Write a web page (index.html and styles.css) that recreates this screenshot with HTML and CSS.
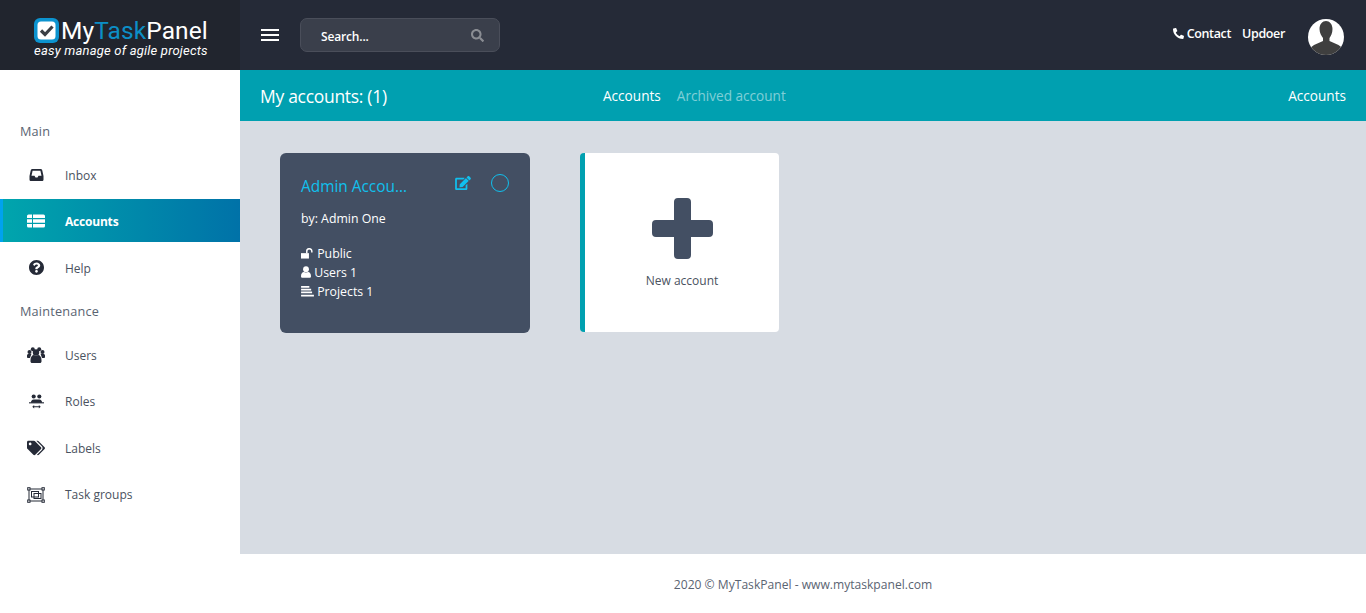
FILE: index.html
```html
<!DOCTYPE html>
<html lang="en">
<head>
<meta charset="UTF-8" />
<title>MyTaskPanel</title>
<link rel="stylesheet" href="styles.css">
</head>
<body>
<header class="topbar">
  <div class="brand">
    <div class="brand-row">
      <svg class="brand-mark" viewBox="0 0 25 25"><rect width="25" height="25" rx="6" fill="#0c93cf"/><rect x="3.5" y="3.5" width="18" height="18" rx="3.5" fill="#fff"/><path d="M7 12.5l4 4 7.5-8" fill="none" stroke="#3b3f45" stroke-width="3.2"/></svg>
      <span class="brand-name">My<span class="brand-blue">Task</span>Panel</span>
    </div>
    <div class="brand-tag">easy manage of agile projects</div>
  </div>
  <div class="topnav">
    <div class="burger"><span></span><span></span><span></span></div>
    <div class="search">
      <span class="search-text">Search...</span>
      <svg class="search-icon" viewBox="0 0 512 512"><path fill="#8a8d93" d="M505 442.700L405.300 343c-4.500-4.500-10.600-7-17-7H372c27.600-35.300 44-79.700 44-128C416 93.100 322.900 0 208 0S0 93.100 0 208s93.100 208 208 208c48.300 0 92.700-16.400 128-44v16.300c0 6.400 2.500 12.500 7 17l99.700 99.700c9.400 9.400 24.600 9.400 33.900 0l28.300-28.300c9.400-9.400 9.400-24.600.1-34zM208 336c-70.700 0-128-57.200-128-128 0-70.700 57.200-128 128-128 70.700 0 128 57.200 128 128 0 70.700-57.200 128-128 128z"/></svg>
    </div>
    <div class="topnav-right">
      <div class="toplinks">
        <svg class="phone" viewBox="0 0 512 512"><path fill="#fff" d="M493.400 24.600l-104-24c-11.300-2.600-22.900 3.300-27.500 13.900l-48 112c-4.200 9.800-1.400 21.300 6.900 28l60.600 49.600c-36 76.700-98.900 140.500-177.200 177.200l-49.600-60.600c-6.800-8.300-18.200-11.100-28-6.900l-112 48C3.900 366.500-2 378.100.6 389.400l24 104C27.100 504.200 36.700 512 48 512c256.100 0 464-207.500 464-464 0-11.200-7.700-20.900-18.600-23.400z" transform="matrix(-1 0 0 1 512 0)"/></svg>
        <span class="toplink contact">Contact</span>
        <span class="toplink">Updoer</span>
      </div>
      <svg class="avatar" viewBox="0 0 36 36"><defs><clipPath id="avatarClip"><circle cx="18" cy="18" r="18"/></clipPath></defs><g clip-path="url(#avatarClip)"><rect width="36" height="36" fill="#fff"/><path d="M11.500 10c0-5 3-8 6.500-8s6.500 3 6.500 8c0 4-1.500 7-3 9v3l9 4 4 3v7H2v-7l4-3 9-4v-3c-1.500-2-3.500-5-3.500-9z" fill="#3f3f3f"/></g></svg>
    </div>
  </div>
</header>

<div class="shell">
  <aside class="sidebar">
    <div class="side-label">Main</div>
    <a class="side-item">
      <svg class="side-icon narrow inbox" viewBox="0 0 14 12"><path fill-rule="evenodd" d="M3 0h8c1 0 1.500.5 1.800 1.500L14 7v3.500c0 1-.7 1.500-1.500 1.500h-11C.7 12 0 11.500 0 10.500V7l1.200-5.500C1.500.5 2 0 3 0zM3.100 1.800L2 6.800h3l1 1.700h2l1-1.700h3l-1.100-5z"/></svg>
      <span>Inbox</span>
    </a>
    <a class="side-item active">
      <svg class="side-icon" viewBox="0 0 18 13"><path fill="#fff" d="M0 1.500A1.500 1.500 0 0 1 1.500 0H5v3.500H0zM6 0h10.500A1.500 1.500 0 0 1 18 1.500v2H6zM0 4.700h5v3.600H0zM6 4.700h12v3.600H6zM0 9.500h5V13H1.500A1.500 1.500 0 0 1 0 11.500zM6 9.500h12v2a1.500 1.500 0 0 1-1.500 1.500H6z"/></svg>
      <span>Accounts</span>
    </a>
    <a class="side-item">
      <svg class="side-icon narrow" viewBox="8 8 496 496"><path d="M504 256c0 137-111 248-248 248S8 393 8 256 119 8 256 8s248 111 248 248zM262.700 90c-54.500 0-89.300 23-116.500 63.800-3.500 5.300-2.400 12.400 2.700 16.300l34.700 26.300c5.200 3.900 12.600 3 16.700-2.100 17.900-22.700 30.100-35.800 57.300-35.800 20.400 0 45.700 13.100 45.700 33 0 15-12.400 22.700-32.600 34C247.100 238.500 216 254.900 216 296v4c0 6.600 5.400 12 12 12h56c6.600 0 12-5.400 12-12v-1.300c0-28.500 83.200-29.700 83.200-106.700 0-58-60.200-102-116.500-102zM256 338c-25.400 0-46 20.600-46 46 0 25.400 20.600 46 46 46s46-20.600 46-46c0-25.400-20.600-46-46-46z"/></svg>
      <span>Help</span>
    </a>
    <div class="side-label">Maintenance</div>
    <a class="side-item low">
      <svg class="side-icon" viewBox="0 0 18 16"><circle cx="2.500" cy="5" r="2"/><circle cx="15.500" cy="5" r="2"/><circle cx="5.800" cy="2.300" r="2"/><circle cx="12.200" cy="2.300" r="2"/><circle cx="9" cy="5.500" r="3.200"/><path d="M0 8.500c0-1 1-1.700 2-1.700h2.500L3 11H.8C.3 11 0 10.600 0 10zM18 8.500c0-1-1-1.700-2-1.700h-2.500L15 11h2.200c.5 0 .8-.4.800-1z"/><path d="M3.500 13c0-3 1.500-5 3.500-5 1 .9 3 .9 4 0 2 0 3.500 2 3.500 5v1.500c0 .9-.7 1.500-1.500 1.500H5c-.8 0-1.500-.6-1.500-1.500z"/></svg>
      <span>Users</span>
    </a>
    <a class="side-item low">
      <svg class="side-icon narrow" viewBox="0 0 16 15"><circle cx="5" cy="2.200" r="2.200"/><circle cx="11" cy="2.200" r="2.200"/><path d="M2 8.800c0-2 1.300-3.400 3-3.400h6c1.700 0 3 1.400 3 3.400z"/><path d="M0 8.300h16v1.200H0z"/><path d="M5.500 12.600h5v.9h-5zM5.500 11.100L3.500 13l2 1.900zM10.500 11.100L12.500 13l-2 1.900z"/></svg>
      <span>Roles</span>
    </a>
    <a class="side-item low">
      <svg class="side-icon" viewBox="0 0 640 512"><path d="M497.900 225.900L286.100 14.100A48 48 0 0 0 252.100 0H48C21.500 0 0 21.500 0 48v204.100a48 48 0 0 0 14.100 33.900l211.900 211.900c18.700 18.700 49.100 18.700 67.900 0l204.100-204.100c18.700-18.700 18.700-49.100 0-67.900zM112 160c-26.500 0-48-21.500-48-48s21.500-48 48-48 48 21.500 48 48-21.500 48-48 48zm513.900 133.800L421.800 497.900c-18.700 18.700-49.100 18.700-67.900 0l-.4-.4L527.600 323.500c17-17 26.400-39.600 26.400-63.600s-9.400-46.600-26.400-63.600L331.400 0h48.700a48 48 0 0 1 33.900 14.100l211.900 211.900c18.700 18.700 18.700 49.100 0 67.800z"/></svg>
      <span>Labels</span>
    </a>
    <a class="side-item low">
      <svg class="side-icon" viewBox="0 0 18 16"><g fill="none" stroke="#252a37" stroke-width="1"><rect x="2" y="2" width="14" height="12"/><rect x="4.500" y="4.500" width="7" height="5.500"/><rect x="7" y="6.500" width="7" height="5"/></g><g fill="#fff" stroke="#252a37" stroke-width="1"><rect x=".7" y=".7" width="2.300" height="2.300"/><rect x="15" y=".7" width="2.300" height="2.300"/><rect x=".7" y="13" width="2.300" height="2.300"/><rect x="15" y="13" width="2.300" height="2.300"/></g></svg>
      <span>Task groups</span>
    </a>
  </aside>

  <div class="content">
    <div class="subhead">
      <h1 class="subhead-title">My accounts: (1)</h1>
      <nav class="tabs">
        <a class="tab current">Accounts</a>
        <a class="tab">Archived account</a>
      </nav>
      <div class="crumb">Accounts</div>
    </div>

    <main class="cards">
      <div class="account-card">
        <div class="account-top">
          <span class="account-name">Admin Accou...</span>
          <svg class="edit-icon" viewBox="0 0 576 512"><path fill="#10c0ee" d="M402.600 83.200l90.200 90.200c3.800 3.800 3.800 10 0 13.800L274.400 405.600l-92.800 10.300c-12.400 1.400-22.900-9.100-21.500-21.500l10.300-92.800L388.800 83.200c3.800-3.800 10-3.800 13.800 0zm162-22.900l-48.800-48.800c-15.200-15.200-39.900-15.200-55.200 0l-35.400 35.400c-3.800 3.800-3.800 10 0 13.800l90.200 90.200c3.800 3.800 10 3.800 13.800 0l35.400-35.400c15.200-15.300 15.200-40 0-55.200zM384 346.200V448H64V128h229.800c3.200 0 6.200-1.300 8.500-3.500l40-40c7.600-7.600 2.200-20.500-8.500-20.500H48C21.500 64 0 85.500 0 112v352c0 26.500 21.500 48 48 48h352c26.500 0 48-21.500 48-48V306.200c0-10.700-12.900-16-20.500-8.500l-40 40c-2.200 2.300-3.500 5.300-3.500 8.500z"/></svg>
          <span class="account-radio"></span>
        </div>
        <div class="account-by">by: Admin One</div>
        <ul class="account-meta">
          <li>
            <svg class="meta-icon lock" viewBox="0 0 18 14"><path fill="#fff" d="M0 6.500h11V14H0z"/><path fill="none" stroke="#fff" stroke-width="2" d="M8 6.500V4a3.500 3.500 0 0 1 7-.3v2"/></svg>
            Public
          </li>
          <li>
            <svg class="meta-icon user" viewBox="0 0 12 14"><circle cx="6" cy="3.600" r="3.500" fill="#fff"/><path fill="#fff" d="M0 12c0-3 1.500-5 3.500-5 1 .8 4 .8 5 0 2 0 3.500 2 3.500 5 0 1.200-.8 2-2 2H2c-1.200 0-2-.8-2-2z"/></svg>
            Users 1
          </li>
          <li>
            <svg class="meta-icon stack" viewBox="0 0 14 12"><path fill="#fff" d="M0 0h9v2H0zM0 3h11v2H0zM0 6h12v2H0zM0 9.500h14v2H0z"/></svg>
            Projects 1
          </li>
        </ul>
      </div>

      <div class="new-card">
        <svg class="plus" viewBox="0 0 61 61"><path fill="#434f63" d="M22 4a4 4 0 0 1 4-4h9a4 4 0 0 1 4 4v18h18a4 4 0 0 1 4 4v9a4 4 0 0 1-4 4H39v18a4 4 0 0 1-4 4h-9a4 4 0 0 1-4-4V39H4a4 4 0 0 1-4-4v-9a4 4 0 0 1 4-4h18z"/></svg>
        <span class="new-label">New account</span>
      </div>
    </main>

    <footer class="footer">2020 © MyTaskPanel - www.mytaskpanel.com</footer>
  </div>
</div>
</body>
</html>
```

FILE: styles.css
```css
* { box-sizing: border-box; }
html, body {
  height: 100%;
}
body {
  margin: 0;
  display: flex;
  flex-direction: column;
  height: 613px;
  overflow: hidden;
  background: #fff;
  color: #3c4454;
  font-family: "Open Sans", "Noto Sans", sans-serif;
  font-size: 13px;
}

/* top bar */
.topbar {
  display: flex;
  height: 70px;
  flex: none;
}
.brand {
  width: 240px;
  background: #21252e;
  color: #fff;
  padding: 17px 0 0 34px;
}
.brand-row {
  display: flex;
  align-items: center;
  height: 26px;
}
.brand-mark {
  width: 25px;
  height: 25px;
  margin-right: 2px;
}
.brand-name {
  font-family: "Roboto", sans-serif;
  font-size: 24.5px;
  letter-spacing: 0.1px;
  font-weight: 400;
  white-space: nowrap;
}
.brand-blue { color: #0c8fc7; }
.brand-tag {
  font-family: "Roboto", sans-serif;
  font-style: italic;
  font-size: 13px;
  letter-spacing: 0.2px;
  line-height: 16px;
  white-space: nowrap;
}
.topnav {
  flex: 1;
  display: flex;
  align-items: center;
  background: #252a37;
  color: #fff;
  padding: 0 22px 0 21px;
}
.burger {
  width: 18px;
  margin-right: 21px;
}
.burger span {
  display: block;
  height: 2px;
  background: #fff;
  margin: 3px 0;
}
.search {
  display: flex;
  align-items: center;
  justify-content: space-between;
  width: 200px;
  height: 34px;
  padding: 0 15px 0 20px;
  background: #3a3f4b;
  border: 1px solid #4a4e5a;
  border-radius: 7px;
  font-size: 12px;
  font-weight: 600;
}
.search-text { margin-top: 2px; letter-spacing: -0.15px; }
.search-icon {
  width: 13px;
  height: 13px;
}
.topnav-right {
  margin-left: auto;
  display: flex;
  align-items: center;
}
.toplinks {
  display: flex;
  align-items: center;
  margin-top: -4px;
}
.phone {
  width: 11px;
  height: 11px;
  margin-right: 3px;
}
.toplink {
  font-weight: 600;
  font-size: 12.5px;
  letter-spacing: -0.35px;
}
.contact { margin-right: 11px; }
.avatar {
  width: 36px;
  height: 36px;
  margin: 4px 0 0 23px;
}

/* sidebar */
.shell {
  flex: 1;
  display: flex;
  min-height: 0;
}
.sidebar {
  display: flex;
  flex-direction: column;
  width: 240px;
  flex: none;
  padding-top: 40.5px;
  background: #fff;
}
.side-label {
  height: 41px;
  line-height: 41px;
  padding-left: 20px;
  font-size: 12.7px;
  letter-spacing: 0.2px;
  color: #5a6472;
}
.side-item {
  display: flex;
  align-items: center;
  height: 43px;
  margin: 1.75px 0;
  padding-left: 27px;
  color: #4a5260;
  font-size: 12px;
}
.side-item span { margin-top: 2px; }
.side-item.low span { margin-top: 0; }
.side-icon {
  width: 18px;
  height: 16px;
  margin-right: 20px;
  fill: #252a37;
}
.side-icon.narrow {
  width: 15px;
  height: 15px;
  margin: 0 21px 0 2px;
}
.side-icon.inbox {
  height: 12px;
}
.side-item.active {
  margin: 1.25px 0 2.25px;
  padding-left: 24px;
  border-left: 3px solid #00a2ef;
  background: linear-gradient(to right, #00a5ad, #0072a8);
  color: #fff;
  font-weight: 700;
  letter-spacing: -0.2px;
}

/* page */
.content {
  flex: 1;
  display: flex;
  flex-direction: column;
  min-width: 0;
}
.subhead {
  display: flex;
  align-items: center;
  height: 51px;
  flex: none;
  padding: 0 20px 0 20px;
  background: #00a0b0;
  color: #fff;
}
.subhead-title {
  width: 343px;
  margin: 0;
  font-size: 17.5px;
  font-weight: 400;
  letter-spacing: -0.3px;
}
.tabs {
  display: flex;
  gap: 16px;
}
.tab {
  color: rgba(255, 255, 255, 0.5);
  font-size: 13.6px;
}
.tab.current { color: #fff; }
.crumb {
  margin-left: auto;
  font-size: 13.6px;
}
.cards {
  flex: 1;
  display: flex;
  align-items: flex-start;
  gap: 50px;
  padding: 32px 40px;
  background: #d7dce3;
}
.account-card {
  width: 250px;
  height: 180px;
  padding: 21px 21px 0;
  background: #434f63;
  border-radius: 6px;
  color: #fff;
}
.account-top {
  display: flex;
  align-items: center;
  height: 22px;
}
.account-name {
  flex: 1;
  color: #10c0ee;
  font-size: 15.4px;
  margin-top: 2px;
}
.edit-icon {
  width: 16px;
  height: 14px;
  margin-right: 20px;
  margin-top: -4px;
}
.account-radio {
  width: 18px;
  height: 18px;
  margin-top: -4px;
  border: 1px solid #10c0ee;
  border-radius: 50%;
}
.account-by {
  margin-top: 13px;
  line-height: 19px;
  font-size: 12.3px;
}
.account-meta {
  list-style: none;
  margin: 16px 0 0;
  padding: 0;
  line-height: 19px;
  font-size: 12.3px;
}
.meta-icon { vertical-align: -1px; }
.meta-icon.lock { width: 13px; height: 11px; }
.meta-icon.user { width: 10px; height: 12px; }
.meta-icon.stack { width: 13px; height: 11px; }
.new-card {
  display: flex;
  flex-direction: column;
  align-items: center;
  width: 199px;
  height: 179px;
  padding-top: 45px;
  background: #fff;
  border-left: 5px solid #00a0b0;
  border-radius: 4px;
}
.plus {
  width: 61px;
  height: 61px;
}
.new-label {
  margin-top: 13px;
  font-size: 12px;
  color: #4a5260;
}
.footer {
  flex: none;
  height: 59px;
  line-height: 62px;
  text-align: center;
  background: #fff;
  font-size: 12.1px;
  color: #5a6472;
}
```
